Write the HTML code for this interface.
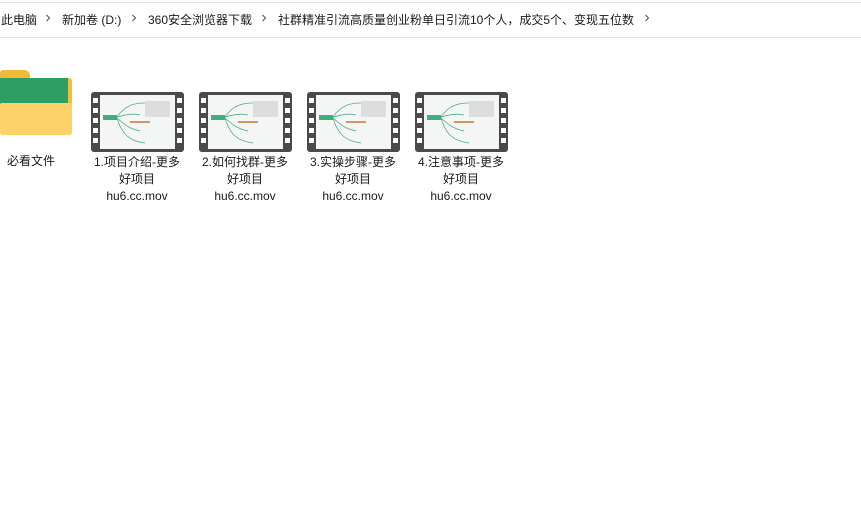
<!DOCTYPE html><html><head><meta charset="utf-8"><style>
body{margin:0;width:861px;height:509px;background:#fff;position:relative;overflow:hidden;font-family:"Liberation Sans","Noto Sans CJK SC",sans-serif;font-size:12px;color:#1a1a1a}
.bar{position:absolute;left:0;top:2px;width:861px;height:34px;border-top:1px solid #e5e5e5;border-bottom:1px solid #e5e5e5}
.bc{position:absolute;top:11px;white-space:nowrap;font-size:12px}
.ch{position:absolute;top:13px;width:6px;height:10px}
.it{position:absolute;width:100px;text-align:center;line-height:17px;font-size:12px}
.film{position:absolute;width:93px;height:60px;background:#4a4a4a;border-radius:3px}
.scr{position:absolute;left:9px;top:3px;width:75px;height:54px;background:#f4f6f6}
.h{position:absolute;width:5px;height:5px;background:#fff}
</style></head><body>
<div class="bar"></div>
<span class="bc" style="left:1px">此电脑</span><svg class="ch" style="left:45px"><path d="M1.5 2 L4.5 5 L1.5 8" stroke="#555" fill="none" stroke-width="1.1"/></svg>
<span class="bc" style="left:62px">新加卷 (D:)</span><svg class="ch" style="left:131px"><path d="M1.5 2 L4.5 5 L1.5 8" stroke="#555" fill="none" stroke-width="1.1"/></svg>
<span class="bc" style="left:148px">360安全浏览器下载</span><svg class="ch" style="left:261px"><path d="M1.5 2 L4.5 5 L1.5 8" stroke="#555" fill="none" stroke-width="1.1"/></svg>
<span class="bc" style="left:278px">社群精准引流高质量创业粉单日引流10个人，成交5个、变现五位数</span><svg class="ch" style="left:644px"><path d="M1.5 2 L4.5 5 L1.5 8" stroke="#555" fill="none" stroke-width="1.1"/></svg>
<div style="position:absolute;left:0;top:70px;width:72px;height:65px">
<div style="position:absolute;left:0;top:0;width:30px;height:12px;background:#f0b93a;border-radius:3px 6px 0 0"></div>
<div style="position:absolute;left:0;top:8px;width:72px;height:57px;background:#f4bd3e;border-radius:3px"></div>
<div style="position:absolute;left:0;top:8px;width:68px;height:30px;background:#2f9e62"></div>
<div style="position:absolute;left:0;top:33px;width:72px;height:32px;background:#fcd269;border-radius:2px 2px 3px 3px"></div>
</div>
<div class="it" style="left:-19px;top:153px">必看文件</div>
<div id="f"></div>
<script>
var names=["1.项目介绍-更多","2.如何找群-更多","3.实操步骤-更多","4.注意事项-更多"];
var h="";
for(var i=0;i<4;i++){var x=91+i*108;
h+='<div class="film" style="left:'+x+'px;top:92px"><div class="scr"><div style="position:absolute;left:3px;top:20px;width:14px;height:5px;background:#3bb07a"></div><svg width="75" height="54" style="position:absolute;left:0;top:0"><path d="M17 22 C25 10 35 8 45 8 M17 23 C25 30 30 34 40 36 M17 23 C22 40 30 46 45 48 M17 22 C25 20 32 18 40 20" stroke="#5a8" fill="none" stroke-width=".8"/><rect x="45" y="6" width="25" height="16" fill="#ddd"/><rect x="30" y="26" width="20" height="2" fill="#c96"/></svg></div>';
for(var j=0;j<5;j++){h+='<div class="h" style="left:2px;top:'+(6+j*10)+'px"></div><div class="h" style="left:86px;top:'+(6+j*10)+'px"></div>';}
h+='</div><div class="it" style="left:'+(x-4)+'px;top:154px">'+names[i]+'<br>好项目<br>hu6.cc.mov</div>';}
document.getElementById("f").innerHTML=h;
</script>
</body></html>
